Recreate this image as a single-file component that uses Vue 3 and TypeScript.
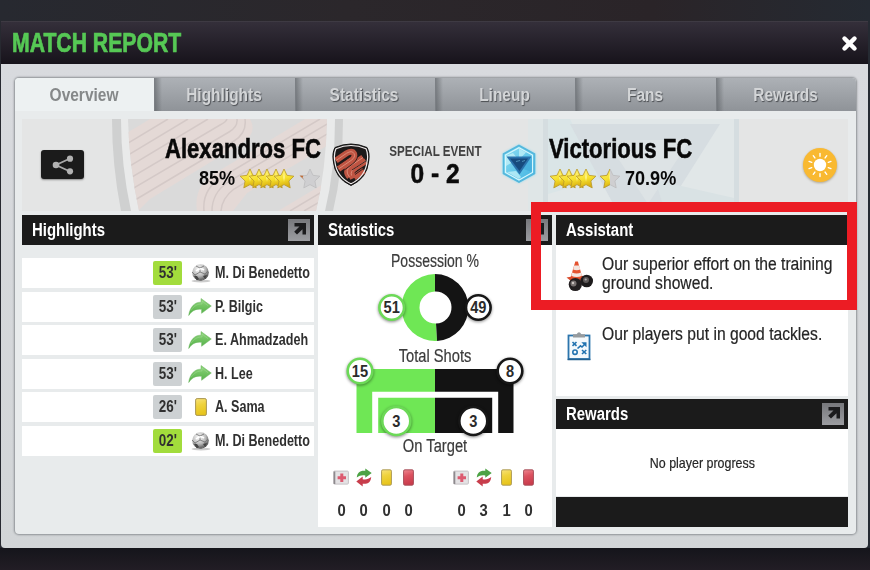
<template>
  <div class="screen">
    <!-- Shared icon sprite -->
    <svg class="sprite" aria-hidden="true">
      <defs>
        <linearGradient id="gold" x1="0" y1="0" x2="0.3" y2="1">
          <stop offset="0" stop-color="#fff27a" />
          <stop offset="0.6" stop-color="#f6e02c" />
          <stop offset="1" stop-color="#d9ae10" />
        </linearGradient>
        <linearGradient id="yellow-card" x1="0" y1="0" x2="0.2" y2="1">
          <stop offset="0" stop-color="#f8e27a" />
          <stop offset="0.45" stop-color="#efd23c" />
          <stop offset="1" stop-color="#e7c41c" />
        </linearGradient>
        <linearGradient id="red-card" x1="0" y1="0" x2="0.2" y2="1">
          <stop offset="0" stop-color="#ee8790" />
          <stop offset="0.45" stop-color="#dc5361" />
          <stop offset="1" stop-color="#c93c4c" />
        </linearGradient>
        <linearGradient id="leaf" x1="0" y1="0" x2="0" y2="1">
          <stop offset="0" stop-color="#8fd47c" />
          <stop offset="1" stop-color="#4fae43" />
        </linearGradient>
        <radialGradient id="leather" cx="0.4" cy="0.3" r="0.75">
          <stop offset="0" stop-color="#ffffff" />
          <stop offset="0.55" stop-color="#b9b9b9" />
          <stop offset="1" stop-color="#3c3c3c" />
        </radialGradient>
        <linearGradient id="ice" x1="0" y1="0" x2="1" y2="1">
          <stop offset="0" stop-color="#8fe0f3" />
          <stop offset="1" stop-color="#3fb2e2" />
        </linearGradient>
      </defs>

      <symbol id="icon-ball" viewBox="0 0 24 20">
        <ellipse cx="13" cy="18" rx="9.500" ry="1.500" fill="#aaa" opacity="0.6" />
        <circle cx="12.500" cy="9.500" r="8.300" fill="url(#leather)" />
        <path d="M8 3l4 2 4-2M12 5v4l-5 3-3-3M12 9l5 2 3-3M7 12l1 4 5 1.500 4-2.500v-4" fill="none" stroke="#777" stroke-width="0.900" />
        <path d="M6 13l3 0 2 3-2 1.500zM15 13l4-1-2 4z" fill="#444" />
        <path d="M8 8q4-4 8-1" stroke="#fff" stroke-width="1.600" fill="none" />
      </symbol>

      <symbol id="icon-sub" viewBox="0 0 24 20">
        <path d="M0.700 18.500C2 9.500 7 5 13 5.200V1.500L23.300 9 13.600 16.300V12.300C8 11.500 4 13.500 0.700 18.500z" fill="url(#leaf)" stroke="#68b45c" stroke-width="0.500" />
        <path d="M3 13.500C6 8.500 10 6.800 14 7V4l6 4.700" fill="none" stroke="#b5e5a6" stroke-width="1" opacity="0.35" />
      </symbol>

      <symbol id="icon-yellow" viewBox="0 0 12 18">
        <rect x="0.600" y="0.600" width="10.800" height="16.800" rx="1.500" fill="url(#yellow-card)" stroke="#a99652" stroke-width="1" />
      </symbol>

      <symbol id="icon-red" viewBox="0 0 12 18">
        <rect x="0.600" y="0.600" width="10.800" height="16.800" rx="1.500" fill="url(#red-card)" stroke="#a34b57" stroke-width="1" />
      </symbol>

      <symbol id="icon-injury" viewBox="0 0 16 16">
        <rect x="0.600" y="1.600" width="14.800" height="13" rx="1" fill="#e4e2e4" stroke="#c5c1c5" />
        <path d="M1.500 2v12.500" stroke="#8d8a8d" stroke-width="1.600" />
        <path d="M7.300 4h3v2.700H13v3h-2.700v2.700h-3V9.700H4.600v-3h2.700z" fill="#dc5a70" />
      </symbol>

      <symbol id="icon-swap" viewBox="0 0 16 19">
        <path d="M0.800 9.500C1.200 4.500 4 2.300 9.300 2.800V0.500L15.700 5 9.300 9.800V7.500C6 7 3.500 7.500 0.800 9.500z" fill="#4ca244" />
        <path d="M15.200 9C14.800 14 12 16.300 6.700 15.800v2.700L0.300 13.600l6.400-5v2.600c3.300 0.600 5.800 0 8.500-2.200z" fill="#c83d4c" />
      </symbol>

      <symbol id="icon-open" viewBox="0 0 22 22">
        <path d="M6.500 4H18v11.500h-3.500v-5.300L9 15.500 6.200 12.700l5.300-5.200h-5z" fill="#1b1b1d" />
      </symbol>

      <symbol id="icon-star" viewBox="0 0 22 21">
        <path d="M11 1l3 6.300 6.900 0.900-5 4.800 1.300 6.900L11 16.600l-6.200 3.300L6.100 13l-5-4.800L8 7.300z" fill="url(#gold)" stroke="#b8982a" stroke-width="0.800" stroke-linejoin="round" />
        <path d="M11 3l1 6-1 5-1-5z" fill="#fffbb0" opacity="0.65" />
      </symbol>

      <symbol id="icon-star-empty" viewBox="0 0 22 21">
        <path d="M11 1l3 6.300 6.900 0.900-5 4.800 1.300 6.900L11 16.600l-6.200 3.300L6.100 13l-5-4.800L8 7.300z" fill="#cfcfd1" stroke="#bdbcbe" stroke-width="0.800" stroke-linejoin="round" />
      </symbol>

      <symbol id="icon-training" viewBox="0 0 28 32">
        <path d="M0.500 17.500l14-2.500 8 3.500-13 6z" fill="#d94c2c" />
        <path d="M9.300 1.500h2.600l4.300 15.500q-5.500 3-11.500 0z" fill="#e5532f" />
        <path d="M8.200 5.500h5l1.100 4q-3.500 1.500-7.200 0zM6.200 12.500q4.500 2 8.900 0l0.900 3.200q-5.300 2.500-10.700 0z" fill="#f3e6e0" />
        <path d="M10 24l14-4" stroke="#777" stroke-width="4" />
        <circle cx="20.700" cy="21" r="6.300" fill="#1d1b1c" />
        <circle cx="9.300" cy="24.500" r="6.600" fill="#231f20" />
        <circle cx="7.500" cy="23.500" r="3" fill="#77706f" />
        <circle cx="20" cy="20" r="3" fill="#5d5858" />
        <circle cx="7" cy="23" r="1.200" fill="#ccc5c2" />
        <circle cx="19.700" cy="19.500" r="1.100" fill="#aaa" />
      </symbol>

      <symbol id="icon-tactics" viewBox="0 0 24 30">
        <rect x="1.500" y="4.500" width="21" height="23.500" fill="#f4f9fc" stroke="#2c75ad" stroke-width="1.800" />
        <path d="M0.600 28.500h22.800" stroke="#24608f" stroke-width="1.500" />
        <path d="M6 6.500V3.200h3.600q2.400-3.800 4.800 0H18v3.300z" fill="#969b9e" />
        <path d="M5.500 11l4 3.800M9.500 11l-4 3.800M15 19l4.300 4M19.300 19L15 23" stroke="#2273b0" stroke-width="1.600" />
        <circle cx="8" cy="21.200" r="2.200" fill="none" stroke="#2273b0" stroke-width="1.600" />
        <path d="M10.500 17.500l3-2.700 1.500 1.200 3-3" fill="none" stroke="#2273b0" stroke-width="1.600" />
        <path d="M14.300 11.300h5.200v5z" fill="#2273b0" />
      </symbol>
    </svg>

    <header class="title-bar">
      <h1 class="title">MATCH REPORT</h1>
      <svg class="close" viewBox="0 0 16 16" role="img" aria-label="Close">
        <path d="M3.300 3.300l9.400 9.400M12.700 3.300l-9.400 9.400" stroke="#fff" stroke-width="4.200" stroke-linecap="round" />
      </svg>
    </header>

    <main class="window">
      <div class="panel">
        <nav class="tabs">
          <button v-for="tab in tabs" :key="tab" type="button" class="tab" :class="{ active: tab === activeTab }" @click="activeTab = tab">
            <span>{{ tab }}</span>
          </button>
        </nav>

        <section class="banner">
          <svg class="banner-art" viewBox="22 119 826 92" aria-hidden="true">
            <defs>
              <clipPath id="shield-clip">
                <path d="M128 119H327Q326 170 316 211H139Q129 165 128 119z" />
              </clipPath>
            </defs>
            <rect x="22" y="119" width="826" height="92" fill="#e4e5e5" />
            <path d="M112 119H343Q343 170 333 211H121Q112 165 112 119z" fill="#cfd0d0" />
            <path d="M121 119H335Q335 170 325 211H131Q121 165 121 119z" fill="#e9eaea" />
            <g clip-path="url(#shield-clip)">
              <rect x="120" y="119" width="215" height="92" fill="#dadada" />
              <path d="M120 137L150 119h100q8 14-8 24L150 199l-12 12h-18z" fill="#e4d9d6" />
              <path d="M197 211q-4-26 20-39l88-53h30v22l-88 52-14 18z" fill="#e4d9d6" />
              <path d="M278 211l57-34v34z" fill="#e4d9d6" />
              <g fill="none" stroke="#d4c9c7" stroke-width="1.500">
                <path d="M120 148l48-29M120 160l68-41M120 172l88-53M120 184l100-59q6-3 7-6M122 195l107-63q9-5 8-13M130 203l104-62q13-8 11-22" />
                <path d="M204 211q-2-22 18-34l98-58M212 211q0-18 16-29l106-62M221 211q1-13 13-22l100-59M290 211l45-27M304 211l31-18" />
              </g>
            </g>
            <path d="M528 119h211v92H528z" fill="#dfe6e7" />
            <path d="M548 119h186v92H548z" fill="#e1e7e8" />
            <path d="M548 119h22l30 60-52 15z" fill="#dae5e7" />
            <path d="M570 124h150l-55 87h-48z" fill="#d6dde1" />
            <path d="M606 140h84l-42 64z" fill="#dde3e5" />
            <path d="M655 180l79 18v13H665z" fill="#d9e2e4" />
            <path d="M734 119h5v92h-5zM543 119h5v92h-5z" fill="#d5dde0" />
          </svg>

          <div class="banner-content">
            <button type="button" class="share" aria-label="Share">
              <svg viewBox="0 0 22 20">
                <path d="M18 3.500L4 10l14 6.500" fill="none" stroke="#a9a9a9" stroke-width="1.800" />
                <circle cx="18" cy="3.700" r="3.100" fill="#b2b2b2" />
                <circle cx="4" cy="10" r="3.300" fill="#b2b2b2" />
                <circle cx="18" cy="16.300" r="3.100" fill="#b2b2b2" />
              </svg>
            </button>

            <div class="team home">
              <h2 class="team-name">Alexandros FC</h2>
              <div class="rating">
                <span class="percent">85%</span>
                <span class="stars">
                  <svg v-for="n in 5" :key="n" class="star"><use href="#icon-star" /></svg>
                </span>
                <svg class="star spare" viewBox="0 0 22 21">
                  <use href="#icon-star-empty" />
                  <path d="M0.500 7.500l4 0.300-1 1.500L5 11.500z" fill="#c06c35" />
                </svg>
              </div>
            </div>

            <svg class="crest" viewBox="0 0 38 44" aria-hidden="true">
              <path d="M3 4.500Q19-2.500 35 4.500Q38 10 36.700 18Q35 35.500 19 42.500Q3 35.500 1.300 18Q0 10 3 4.500z" fill="#1d1a1a" stroke="#111" stroke-width="1" />
              <g fill="none">
                <path d="M4 17.500L14.500 10.300Q20 7 22 10.500T19 17.500L6.500 26M34 18L23.500 24.800Q18 28 19.500 32.500L21 35.500M17.500 34Q12 27.500 19 22.500L31 14.500M22 34.500L32 27.500" stroke="#bf5442" stroke-width="6" />
                <path d="M4 17.500L14.500 10.300Q20 7 22 10.500T19 17.500L6.500 26M34 18L23.500 24.800Q18 28 19.500 32.500M17.500 34Q12 27.500 19 22.500L31 14.500" stroke="#df8f7c" stroke-width="0.900" />
                <path d="M5.500 22.500L17 14.500M7.500 30.500L20.500 21Q26.500 17 26 8.500M20 27L34 18M23 31.500L33 24.500" stroke="#2a1a1a" stroke-width="0.900" />
              </g>
              <path d="M4 5.800Q19-0.800 34 5.800Q36.500 11 35.200 18Q33.500 34 19 40.800Q4.500 34 2.800 18Q1.500 11 4 5.800z" fill="none" stroke="#f2eeee" stroke-width="1.200" />
            </svg>

            <div class="score-box">
              <span class="event">SPECIAL EVENT</span>
              <span class="score">0 - 2</span>
            </div>

            <svg class="crest hex" viewBox="0 0 36 40" aria-hidden="true">
              <path d="M18 1.500L33.500 10v19.500L18 38 2.500 29.500V10z" fill="url(#ice)" stroke="#55b7dc" stroke-width="1.600" />
              <path d="M18 3.700L31.500 11v17.500L18 36 4.500 28.500V11z" fill="none" stroke="#d6f7fd" stroke-width="1.200" />
              <path d="M5 12l7-3 5 6-12 7zM18 4.500l7 4-7 7zM20 33l-5-6-9 1 12 7z" fill="#c5f1f8" opacity="0.75" />
              <path d="M31 13l-5 1-4 11 9 3z" fill="#3fa9da" opacity="0.6" />
              <path d="M5.500 12.500H30.500L18.500 30.500z" fill="#2a73ad" />
              <path d="M9 14.500h18L18.500 27z" fill="#174b7e" />
              <path d="M15 17.500l4-1M21 17.500l3-1" stroke="#4d8fb8" stroke-width="1" />
            </svg>

            <div class="team away">
              <h2 class="team-name">Victorious FC</h2>
              <div class="rating">
                <span class="stars">
                  <svg v-for="n in 4" :key="n" class="star"><use href="#icon-star" /></svg>
                </span>
                <svg class="star spare" viewBox="0 0 22 21">
                  <defs>
                    <clipPath id="half-star"><rect width="11" height="21" /></clipPath>
                  </defs>
                  <use href="#icon-star-empty" />
                  <use href="#icon-star" clip-path="url(#half-star)" />
                </svg>
                <span class="percent">70.9%</span>
              </div>
            </div>

            <svg class="weather" viewBox="0 0 36 36" role="img" aria-label="Sunny">
              <circle cx="18" cy="18" r="17" fill="#f9b931" />
              <circle cx="18" cy="18" r="6.200" fill="#fff" />
              <g stroke="#fff" stroke-width="1.400" stroke-linecap="round">
                <path v-for="n in 10" :key="n" d="M18 9.300V6.500" :transform="`rotate(${n * 36} 18 18)`" />
              </g>
            </svg>
          </div>
        </section>

        <div class="columns">
          <section class="column">
            <h3 class="heading">
              <span>Highlights</span>
              <svg class="open"><use href="#icon-open" /></svg>
            </h3>
            <ul class="events">
              <li v-for="(event, i) in events" :key="i" class="event-row">
                <span class="minute" :class="{ goal: event.type === 'ball' }">
                  <span>{{ event.minute }}'</span>
                </span>
                <span class="event-icon">
                  <svg :class="event.type"><use :href="`#icon-${event.type}`" /></svg>
                </span>
                <span class="player">{{ event.player }}</span>
              </li>
            </ul>
          </section>

          <section class="column stats">
            <h3 class="heading">
              <span>Statistics</span>
              <svg class="open"><use href="#icon-open" /></svg>
            </h3>
            <div class="stats-body">
              <div class="stat-label possession-label">Possession %</div>
              <svg class="possession" viewBox="0 0 234 72">
                <path d="M117 3a33.500 33.500 0 1 0 2.100 66.930L118 52.500a16 16 0 1 1-1-32z" fill="#6fe755" />
                <path d="M117 3a33.500 33.500 0 0 1 2.100 66.930L118 52.500a16 16 0 0 0-1-32z" fill="#141414" />
                <g class="bubbles">
                  <circle cx="73.700" cy="36.500" r="12.300" stroke="#6cd957" />
                  <circle cx="160.300" cy="36.500" r="12.300" stroke="#171717" />
                </g>
                <text x="73.700" y="42.500" class="bubble-text">51</text>
                <text x="160.300" y="42.500" class="bubble-text">49</text>
              </svg>
              <div class="stat-label shots-label">Total Shots</div>
              <svg class="shots" viewBox="0 0 234 82">
                <path d="M38.500 12H117v64H38.500z" fill="#6fe755" />
                <path d="M117 12h78.500v64H117z" fill="#131313" />
                <path d="M57.200 76V37.700H177.200V76" fill="none" stroke="#fff" stroke-width="6" />
                <g class="bubbles">
                  <circle cx="42" cy="14" r="12.300" stroke="#6cd957" />
                  <circle cx="192" cy="14" r="12.300" stroke="#171717" />
                  <circle cx="78.300" cy="64" r="14" stroke="#6cd957" />
                  <circle cx="155.300" cy="64" r="14" stroke="#171717" />
                </g>
                <text x="42" y="20" class="bubble-text">15</text>
                <text x="192" y="20" class="bubble-text">8</text>
                <text x="78.300" y="70" class="bubble-text">3</text>
                <text x="155.300" y="70" class="bubble-text">3</text>
              </svg>
              <div class="stat-label target-label">On Target</div>
              <div class="tallies">
                <div v-for="(team, t) in tallies" :key="t" class="tally-group">
                  <div v-for="(count, i) in team" :key="i" class="tally">
                    <svg :class="tallyIcons[i]"><use :href="`#icon-${tallyIcons[i]}`" /></svg>
                    <span>{{ count }}</span>
                  </div>
                </div>
              </div>
            </div>
          </section>

          <section class="column">
            <h3 class="heading"><span>Assistant</span></h3>
            <div class="assistant">
              <div class="tip">
                <svg class="tip-icon cone"><use href="#icon-training" /></svg>
                <p>Our superior effort on the training ground showed.</p>
              </div>
              <div class="tip">
                <svg class="tip-icon board"><use href="#icon-tactics" /></svg>
                <p>Our players put in good tackles.</p>
              </div>
            </div>
            <h3 class="heading">
              <span>Rewards</span>
              <svg class="open"><use href="#icon-open" /></svg>
            </h3>
            <div class="rewards"><span>No player progress</span></div>
            <div class="footer-bar" />
          </section>
        </div>
      </div>
    </main>

    <div class="focus-frame" />
  </div>
</template>

<script setup lang="ts">
import { ref } from 'vue';

type EventType = 'ball' | 'sub' | 'yellow';

interface MatchEvent {
  minute: string;
  type: EventType;
  player: string;
}

const tabs = ['Overview', 'Highlights', 'Statistics', 'Lineup', 'Fans', 'Rewards'];
const activeTab = ref('Overview');

const events: MatchEvent[] = [
  { minute: '53', type: 'ball', player: 'M. Di Benedetto' },
  { minute: '53', type: 'sub', player: 'P. Bilgic' },
  { minute: '53', type: 'sub', player: 'E. Ahmadzadeh' },
  { minute: '53', type: 'sub', player: 'H. Lee' },
  { minute: '26', type: 'yellow', player: 'A. Sama' },
  { minute: '02', type: 'ball', player: 'M. Di Benedetto' },
];

const tallyIcons = ['injury', 'swap', 'yellow', 'red'];
const tallies = [
  [0, 0, 0, 0],
  [0, 3, 1, 0],
];
</script>

<style>
body {
  margin: 0;
  background: #1d1b22;
}
</style>

<style scoped>
.screen {
  position: relative;
  box-sizing: border-box;
  width: 870px;
  height: 570px;
  padding: 21px 2px 0 1px;
  overflow: hidden;
  background: linear-gradient(90deg, #272930 0, #2b272b 40%, #2a2428 75%, #252a32 100%);
  font-family: 'Liberation Sans', Arial, sans-serif;
  color: #303030;
}

.screen::after {
  content: '';
  display: block;
  height: 22px;
  margin: 0 -2px 0 -1px;
  background: linear-gradient(#15151b, #221d25);
}

.sprite {
  position: absolute;
  width: 0;
  height: 0;
}

h1,
h2,
h3,
p,
ul {
  margin: 0;
  padding: 0;
}

button {
  padding: 0;
  border: 0;
  font-family: inherit;
}

.title-bar {
  display: flex;
  align-items: center;
  justify-content: space-between;
  box-sizing: border-box;
  height: 43px;
  padding: 0 10px 0 11px;
  background: linear-gradient(#342f3a, #17131b);
  border-top: 1px solid #3e3a43;
}

/* The scale values below squeeze the type into its condensed look */
.title {
  font-size: 27px;
  line-height: 43px;
  color: #56c855;
  -webkit-text-stroke: 0.7px #56c855;
  scale: 0.785 1;
  transform-origin: left;
}

.close {
  width: 17px;
  height: 17px;
}

.window {
  box-sizing: border-box;
  height: 484px;
  padding: 14px 12px 14px 14px;
  background: linear-gradient(#d8dade, #d2d5d7);
  border-radius: 0 0 4px 4px;
}

.panel {
  height: 456px;
  border-radius: 4px;
  background: #e8ebec;
  box-shadow: 0 0 2px 1px #8d9195;
}

.tabs {
  display: flex;
  height: 33px;
}

.tab {
  flex: 1;
  box-sizing: border-box;
  padding-right: 2px;
  border-left: 1px solid #7b7f84;
  background: linear-gradient(90deg, rgba(80, 84, 88, 0.5), transparent 7px), linear-gradient(#adb1b6, #8f9398);
  font-size: 18px;
  font-weight: bold;
  line-height: 34px;
  color: #d3d5d7;
  text-shadow: 1px 1px 1px #4c4f53;
}

.tab span {
  display: inline-block;
  scale: 0.86 1;
}

.tab:last-child {
  border-top-right-radius: 4px;
}

.tab.active {
  border: 0;
  border-radius: 4px 0 0;
  background: #edf1f2;
  color: #858889;
  text-shadow: none;
}

.banner {
  position: relative;
  height: 92px;
  margin: 8px 8px 0 7px;
}

.banner-art {
  position: absolute;
  inset: 0;
  width: 826px;
  height: 92px;
}

.banner-content {
  position: relative;
  display: flex;
  height: 92px;
}

.share {
  display: flex;
  align-items: center;
  justify-content: center;
  width: 43px;
  height: 29px;
  margin: 31px 0 0 19px;
  border-radius: 3px;
  background: #1b1b1b;
  box-shadow: 0 1px 2px #888;
}

.share svg {
  width: 22px;
  height: 20px;
}

.team {
  padding-top: 15px;
  color: #080808;
}

.home {
  width: 156px;
  margin-left: 81px;
}

.away {
  width: 160px;
  margin-left: 12px;
}

.team-name {
  font-size: 27px;
  line-height: 30px;
  white-space: nowrap;
  -webkit-text-stroke: 0.6px #080808;
  scale: 0.818 1;
  transform-origin: left;
}

.rating {
  display: flex;
  align-items: center;
  height: 28px;
  white-space: nowrap;
}

.home .rating {
  padding-left: 34px;
}

.percent {
  flex: none;
  font-size: 21px;
  font-weight: bold;
  scale: 0.86 1;
  transform-origin: left;
}

.home .percent {
  width: 40px;
}

.stars {
  display: flex;
}

.star {
  flex: none;
  width: 22px;
  height: 21px;
}

.star + .star {
  margin-left: -13.5px;
}

.home .star.spare {
  margin-left: 4px;
}

.away .star.spare {
  margin: 0 4px 0 2px;
}

.crest {
  flex: none;
  width: 38px;
  height: 44px;
  margin: 24px 0 0 11px;
}

.score-box {
  display: flex;
  flex-direction: column;
  align-items: center;
  width: 130px;
  padding-top: 23px;
}

.event {
  font-size: 15.500px;
  font-weight: bold;
  line-height: 18px;
  color: #414141;
  white-space: nowrap;
  scale: 0.75 1;
}

.score {
  font-size: 27px;
  font-weight: bold;
  line-height: 29px;
  color: #0b0b0b;
  -webkit-text-stroke: 0.5px #0b0b0b;
  scale: 0.91 1;
}

.crest.hex {
  width: 36px;
  height: 40px;
  margin: 25px 0 0 1px;
  filter: drop-shadow(0 0 1px #8fdcf2);
}

.weather {
  width: 36px;
  height: 36px;
  margin: 28px 10px 0 auto;
  filter: drop-shadow(0 1px 1px rgba(120, 100, 60, 0.5));
}

.columns {
  display: grid;
  grid-template-columns: 292px 234px 292px;
  gap: 4px;
  margin: 4px 8px 0 7px;
}

.heading {
  display: flex;
  align-items: center;
  justify-content: space-between;
  box-sizing: border-box;
  height: 30px;
  padding: 0 4px 0 10px;
  background: #1b1b1b;
  font-size: 18px;
  line-height: 30px;
  color: #fff;
}

.heading span {
  scale: 0.83 1;
  transform-origin: left;
}

.open {
  width: 22px;
  height: 22px;
  background: linear-gradient(#77787c, #9c9da1);
}

.events {
  display: flex;
  flex-direction: column;
  gap: 3.5px;
  padding-top: 13px;
  list-style: none;
}

.event-row {
  display: flex;
  align-items: center;
  height: 30px;
  padding-left: 131px;
  background: #fff;
}

.minute {
  flex: none;
  width: 29px;
  height: 24px;
  border-radius: 2px;
  background: #cdd1d3;
  font-size: 16px;
  font-weight: bold;
  line-height: 24px;
  text-align: center;
}

.minute span {
  display: inline-block;
  scale: 0.84 1;
}

.minute.goal {
  background: #a2dc3c;
}

.event-icon {
  display: flex;
  flex: none;
  justify-content: center;
  width: 24px;
  margin: 0 3px 0 6px;
}

.event-icon svg {
  width: 24px;
  height: 20px;
}

.event-icon svg.yellow {
  width: 12px;
  height: 18px;
  margin-left: 2px;
}

.player {
  flex: none;
  font-size: 16px;
  font-weight: bold;
  white-space: nowrap;
  scale: 0.785 1;
  transform-origin: left;
}

.stats-body {
  height: 282px;
  background: #fff;
}

.stats-body > svg {
  display: block;
}

.stat-label {
  padding-top: 5px;
  font-size: 17.500px;
  line-height: 22px;
  text-align: center;
  color: #3b3b3b;
  -webkit-text-stroke: 0.2px #3b3b3b;
  scale: 0.84 1;
}

.possession-label {
  scale: 0.8 1;
}

.possession {
  width: 234px;
  height: 72px;
  margin-top: -1px;
}

.shots-label {
  padding-top: 2px;
}

.shots {
  width: 234px;
  height: 82px;
  margin-top: -10px;
  overflow: visible;
}

.target-label {
  padding-top: 0;
  margin-top: -4px;
}

.bubbles {
  fill: #fff;
  stroke-width: 2.600;
  filter: drop-shadow(0 1px 1.500px rgba(0, 0, 0, 0.45));
}

.bubble-text {
  font-size: 17px;
  font-weight: bold;
  text-anchor: middle;
  fill: #2b2b2b;
  scale: 0.86 1;
  transform-box: fill-box;
  transform-origin: center;
}

.tallies {
  display: flex;
  gap: 30px;
  padding: 11px 0 0 12px;
}

.tally-group {
  display: flex;
}

.tally {
  display: flex;
  flex-direction: column;
  align-items: center;
  justify-content: space-between;
  width: 22.500px;
  height: 54px;
  font-size: 17px;
  font-weight: bold;
  line-height: 22px;
}

.tally span {
  scale: 0.87 1;
}

.tally svg {
  width: 16px;
  height: 19px;
}

.tally svg.yellow,
.tally svg.red {
  width: 11px;
  height: 17px;
  margin-top: 1px;
}

.assistant {
  box-sizing: border-box;
  height: 151px;
  margin-bottom: 3px;
  background: #fff;
}

.tip {
  display: flex;
  box-sizing: border-box;
  height: 70px;
  padding: 10px 10px 0;
  font-size: 18px;
  line-height: 19px;
  color: #252525;
}

.tip p {
  flex: none;
  width: 276px;
  -webkit-text-stroke: 0.2px #252525;
  scale: 0.87 1;
  transform-origin: left;
}

.tip-icon {
  flex: none;
  width: 28px;
  height: 32px;
  margin: 5px 8px 0 0;
}

.tip-icon.board {
  width: 24px;
  height: 30px;
  margin: 6px 11px 0 1px;
}

.rewards {
  height: 67px;
  background: #fff;
  font-size: 15px;
  line-height: 68px;
  text-align: center;
  color: #252525;
}

.rewards span {
  display: inline-block;
  -webkit-text-stroke: 0.2px #252525;
  scale: 0.83 1;
}

.footer-bar {
  height: 30px;
  margin-top: 1px;
  background: #1b1b1b;
}

.focus-frame {
  position: absolute;
  left: 531px;
  top: 202px;
  box-sizing: border-box;
  width: 326px;
  height: 108px;
  border: 10px solid #ec1c24;
  pointer-events: none;
}
</style>
